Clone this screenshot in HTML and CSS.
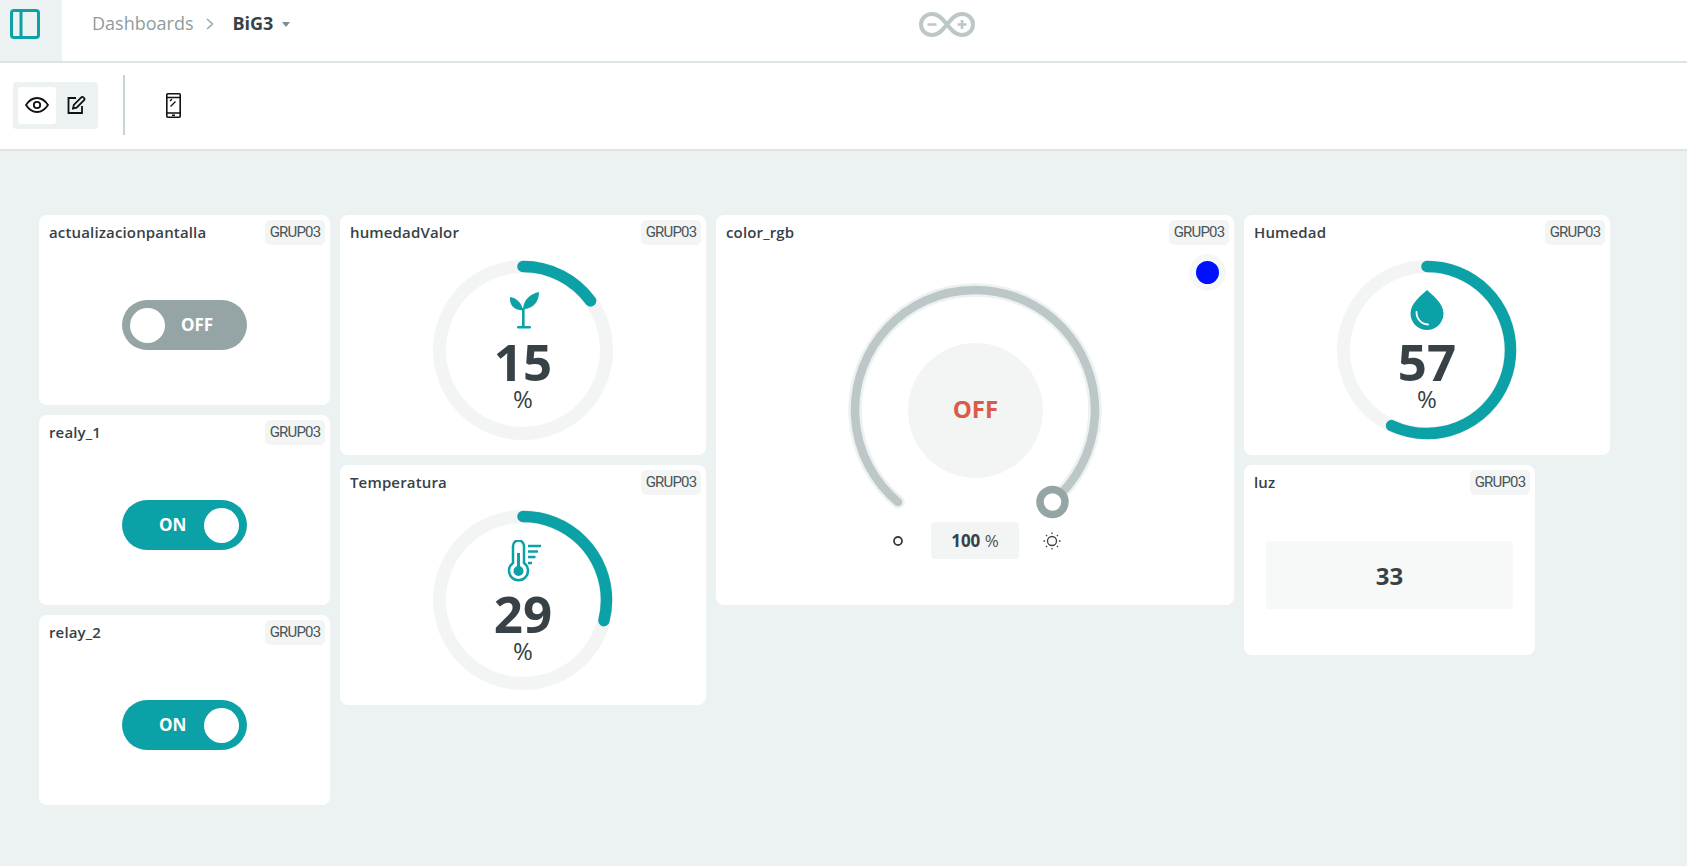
FILE: index.html
```html
<!DOCTYPE html>
<html lang="en">
<head>
  <meta charset="UTF-8" />
  <meta name="viewport" content="width=device-width,initial-scale=1" />
  <title>BiG3 – Dashboards</title>
  <link rel="stylesheet" href="styles.css">
</head>
<body>
  <header class="topbar">
    <button class="panel-btn" type="button" aria-label="Toggle sidebar">
      <svg width="30" height="30" viewBox="0 0 30 30" fill="none" stroke="#0ca1a6" stroke-width="3">
        <rect x="1.5" y="1.5" width="27" height="27" rx="2.5" />
        <path d="M11 1.5v27" />
      </svg>
    </button>
    <nav class="crumbs">
      <span class="crumb-link">Dashboards</span>
      <svg class="crumb-sep" width="8" height="12" viewBox="0 0 8 12" fill="none" stroke="#95a5a6" stroke-width="1.4"><path d="M1 1l5.5 5L1 11" /></svg>
      <span class="crumb-current">BiG3</span>
      <span class="caret"></span>
    </nav>
    <svg class="logo" width="56" height="25" viewBox="0 0 56 25" fill="none" stroke="#bdc7c7">
      <path stroke-width="4" d="M13 2C6.800 2 2 6.600 2 12.500S6.800 23 13 23c8 0 12-7 15-10.500C31 9 35 2 43 2c6.200 0 11 4.600 11 10.500S49.200 23 43 23c-8 0-12-7-15-10.500C25 9 21 2 13 2z" />
      <path stroke-width="2.600" d="M8.500 12.500h9M38.500 12.500h9M43 8v9" />
    </svg>
  </header>

  <div class="toolbar">
    <div class="mode-group">
      <span class="mode-btn active">
        <svg width="24" height="16" viewBox="0 0 24 16" fill="none" stroke="#111" stroke-width="1.800"><path d="M1 8c3-4.600 6.700-7 11-7s8 2.400 11 7c-3 4.600-6.700 7-11 7S4 12.600 1 8z" /><circle cx="12" cy="8" r="3.200" /></svg>
      </span>
      <span class="mode-btn">
        <svg class="pencil" width="20" height="20" viewBox="0 0 20 20" fill="none" stroke="#111" stroke-width="1.800"><path d="M10 3H2.500v15h13.500v-7" /><path d="M7 13.500l.8-3.600 7.500-7.500c.6-.6 1.400-.6 2 0l.8.800c.6.600.6 1.400 0 2l-7.500 7.500z" /></svg>
      </span>
    </div>
    <span class="toolbar-sep"></span>
    <svg class="phone" width="15" height="25" viewBox="0 0 15 25" fill="none" stroke="#111" stroke-width="1.600">
      <rect x=".8" y=".8" width="13.400" height="23.400" rx="1" />
      <path d="M.8 4.500h13.400M.8 20h13.400M6 22.300h3" />
      <path stroke-width="1.300" d="M4.500 13.500l5-5M4 8l2-2" />
    </svg>
  </div>

  <main class="dashboard">
    <div class="col col-sm">
      <section class="card">
        <div class="card-head"><h2>actualizacionpantalla</h2><span class="tag">GRUP03</span></div>
        <div class="card-body">
          <div class="switch"><span class="knob"></span><span class="switch-text">OFF</span></div>
        </div>
      </section>
      <section class="card">
        <div class="card-head"><h2>realy_1</h2><span class="tag">GRUP03</span></div>
        <div class="card-body">
          <div class="switch on"><span class="switch-text">ON</span><span class="knob"></span></div>
        </div>
      </section>
      <section class="card">
        <div class="card-head"><h2>relay_2</h2><span class="tag">GRUP03</span></div>
        <div class="card-body">
          <div class="switch on"><span class="switch-text">ON</span><span class="knob"></span></div>
        </div>
      </section>
    </div>

    <div class="col col-md">
      <section class="card card-gauge">
        <div class="card-head"><h2>humedadValor</h2><span class="tag">GRUP03</span></div>
        <div class="gauge">
          <svg class="gauge-ring" width="180" height="180" viewBox="0 0 180 180" fill="none">
            <circle cx="90" cy="90" r="83.500" stroke="#f3f4f4" stroke-width="13" />
            <circle cx="90" cy="90" r="83.500" stroke="#0ca1a6" stroke-width="11.500" stroke-linecap="round" pathLength="100" stroke-dasharray="15 100" transform="rotate(-90 90 90)" />
          </svg>
          <div class="gauge-inner">
            <svg width="40" height="40" viewBox="0 0 40 40" fill="#0ca1a6">
              <path d="M20 20C18.500 12 13 8 7 7c-.5 7 2.500 13 13 13.500z" />
              <path d="M20 19.500C20.500 9 28 3.500 36 2c0 9-5 16.500-16 17.500z" />
              <rect x="19" y="18" width="2.600" height="19" />
              <rect x="14" y="36" width="14" height="2.500" rx="1.200" />
            </svg>
            <span class="gauge-value">15</span>
            <span class="gauge-unit">%</span>
          </div>
        </div>
      </section>
      <section class="card card-gauge">
        <div class="card-head"><h2>Temperatura</h2><span class="tag">GRUP03</span></div>
        <div class="gauge">
          <svg class="gauge-ring" width="180" height="180" viewBox="0 0 180 180" fill="none">
            <circle cx="90" cy="90" r="83.500" stroke="#f3f4f4" stroke-width="13" />
            <circle cx="90" cy="90" r="83.500" stroke="#0ca1a6" stroke-width="11.500" stroke-linecap="round" pathLength="100" stroke-dasharray="29 100" transform="rotate(-90 90 90)" />
          </svg>
          <div class="gauge-inner">
            <svg width="40" height="42" viewBox="0 0 40 42" fill="none" stroke="#0ca1a6" stroke-width="2.500">
              <path d="M10 23V6a5.500 5.500 0 0 1 11 0v17a9.500 9.500 0 1 1-11 0z" />
              <path stroke-width="3" d="M15.500 13v18" />
              <circle cx="15.500" cy="31" r="5" fill="#0ca1a6" stroke="none" />
              <path d="M25 6h13M25 11.500h10M25 17h7.500M25 23h4" />
            </svg>
            <span class="gauge-value">29</span>
            <span class="gauge-unit">%</span>
          </div>
        </div>
      </section>
    </div>

    <div class="col col-lg">
      <section class="card card-color">
        <div class="card-head"><h2>color_rgb</h2><span class="tag">GRUP03</span></div>
        <span class="color-dot"></span>
        <div class="dial">
          <svg width="260" height="242" viewBox="0 0 260 242" fill="none" stroke-linecap="round">
            <path d="M52.900 221.900A120 120 0 1 1 207.100 221.900" stroke="#ecf1f1" stroke-width="13.500" />
            <path d="M52.900 221.900A120 120 0 1 1 207.100 221.900" stroke="#bdc7c7" stroke-width="8.500" />
            <circle cx="207.500" cy="222" r="12.500" fill="#fff" stroke="#95a5a6" stroke-width="7.500" />
          </svg>
          <div class="dial-center">OFF</div>
        </div>
        <div class="brightness">
          <svg width="20" height="20" viewBox="0 0 20 20" fill="none" stroke="#374146" stroke-width="1.800"><circle cx="10" cy="10" r="4" /></svg>
          <div class="brightness-box"><b>100</b> %</div>
          <svg width="20" height="20" viewBox="0 0 20 20" fill="none" stroke="#374146" stroke-width="1.300">
            <circle cx="10" cy="10" r="4.500" />
            <path d="M10 1.500v1.600M10 16.900v1.600M1.500 10h1.600M16.900 10h1.600M4 4l1.100 1.100M14.900 14.900L16 16M4 16l1.100-1.100M14.900 5.100L16 4" />
          </svg>
        </div>
      </section>
    </div>

    <div class="col col-md">
      <section class="card card-gauge">
        <div class="card-head"><h2>Humedad</h2><span class="tag">GRUP03</span></div>
        <div class="gauge">
          <svg class="gauge-ring" width="180" height="180" viewBox="0 0 180 180" fill="none">
            <circle cx="90" cy="90" r="83.500" stroke="#f3f4f4" stroke-width="13" />
            <circle cx="90" cy="90" r="83.500" stroke="#0ca1a6" stroke-width="11.500" stroke-linecap="round" pathLength="100" stroke-dasharray="57 100" transform="rotate(-90 90 90)" />
          </svg>
          <div class="gauge-inner">
            <svg width="40" height="40" viewBox="0 0 40 40">
              <path fill="#0ca1a6" d="M20 0C15 5 3.500 13 3.500 23.500a16.500 16.500 0 0 0 33 0C36.500 13 25 5 20 0z" />
              <path fill="none" stroke="#fff" stroke-width="1.800" stroke-linecap="round" d="M9.500 22c0 7 4.500 12 11.500 12.500" />
            </svg>
            <span class="gauge-value">57</span>
            <span class="gauge-unit">%</span>
          </div>
        </div>
      </section>
      <section class="card card-value">
        <div class="card-head"><h2>luz</h2><span class="tag">GRUP03</span></div>
        <div class="card-body">
          <div class="value-box">33</div>
        </div>
      </section>
    </div>
  </main>
</body>
</html>
```

FILE: styles.css
```css
body {
  margin: 0;
  height: 100vh;
  overflow: hidden;
  background: #ecf1f1;
  color: #374146;
  font-family: "Open Sans", sans-serif;
}
.topbar {
  display: flex;
  align-items: center;
  height: 61px;
  background: white;
  border-bottom: 2px solid #dce4e4;
}
.panel-btn {
  display: flex;
  align-items: center;
  justify-content: center;
  width: 62px;
  height: 100%;
  padding: 0 12px 13px 0;
  border: none;
  background: #ecf1f1;
}
.crumbs {
  display: flex;
  align-items: center;
  margin-left: 30px;
  padding-bottom: 15px;
  font-size: 18px;
}
.crumb-link {
  color: #8f9c9d;
}
.crumb-sep {
  margin: 2px 18px 0 13px;
}
.crumb-current {
  font-weight: 700;
}
.caret {
  width: 0;
  height: 0;
  margin: 2px 0 0 9px;
  border-left: 4px solid transparent;
  border-right: 4px solid transparent;
  border-top: 5px solid #7f8c8d;
}
.logo {
  margin: -12px 0 0 629px;
}
.toolbar {
  display: flex;
  align-items: center;
  height: 84px;
  padding: 0 0 2px 13px;
  background: white;
  border-bottom: 2px solid #dce4e4;
}
.mode-group {
  display: flex;
  padding: 5px;
  background: #ecf1f1;
  border-radius: 4px;
}
.mode-btn {
  display: flex;
  align-items: center;
  justify-content: center;
  width: 37px;
  height: 37px;
  border-radius: 3px;
}
.mode-btn.active {
  width: 38px;
  background: white;
}
.pencil {
  margin-left: 2px;
}
.toolbar-sep {
  width: 2px;
  height: 60px;
  margin: 0 41px 0 25px;
  background: #c8d3d3;
}
.dashboard {
  display: flex;
  align-items: flex-start;
  gap: 10px;
  padding: 64px 0 0 39px;
}
.col {
  display: flex;
  flex-direction: column;
  gap: 10px;
}
.col-sm { width: 291px; }
.col-md { width: 366px; }
.col-lg { width: 518px; }
.card {
  position: relative;
  display: flex;
  flex-direction: column;
  height: 190px;
  box-sizing: border-box;
  background: white;
  border-radius: 8px;
}
.card-gauge {
  height: 240px;
}
.card-color {
  height: 390px;
}
.card-value {
  width: 291px;
}
.card-head {
  display: flex;
  justify-content: space-between;
  align-items: flex-start;
  height: 30px;
  padding: 5px 5px 0 10px;
  box-sizing: border-box;
  flex-shrink: 0;
}
.card-head h2 {
  margin: 0;
  font-size: 15px;
  font-weight: 600;
  letter-spacing: 0.15px;
  line-height: 24px;
}
.tag {
  width: 60px;
  height: 25px;
  background: #f3f4f4;
  border-radius: 5px;
  color: #4a555a;
  font-family: Roboto, sans-serif;
  font-size: 15px;
  letter-spacing: -0.8px;
  line-height: 25px;
  text-align: center;
}
.card-body {
  flex: 1;
  display: flex;
  align-items: center;
  justify-content: center;
}
.switch {
  display: flex;
  align-items: center;
  gap: 16px;
  width: 125px;
  height: 50px;
  padding: 0 8px;
  box-sizing: border-box;
  background: #95a5a6;
  border-radius: 25px;
}
.switch.on {
  justify-content: space-between;
  padding: 0 8px 0 37px;
  background: #0ca1a6;
}
.knob {
  width: 35px;
  height: 35px;
  background: white;
  border-radius: 50%;
}
.switch-text {
  color: white;
  font-size: 17px;
  font-weight: 700;
  line-height: 22px;
}
.gauge {
  position: relative;
  width: 180px;
  height: 180px;
  margin: 15px auto 0;
}
.gauge-ring {
  display: block;
}
.gauge-inner {
  position: absolute;
  inset: 0;
  display: flex;
  flex-direction: column;
  align-items: center;
  padding-top: 30px;
  box-sizing: border-box;
}
.gauge-value {
  margin-top: 6px;
  font-size: 51px;
  font-weight: 700;
  line-height: 50px;
}
.gauge-unit {
  margin-top: 1px;
  font-size: 24px;
  line-height: 24px;
}
.color-dot {
  position: absolute;
  top: 39px;
  right: 8px;
  width: 23px;
  height: 23px;
  background: #0010ff;
  border: 7px solid #f5f7f7;
  border-radius: 50%;
}
.dial {
  position: relative;
  width: 260px;
  height: 242px;
  margin: 35px auto 0;
}
.dial svg {
  display: block;
}
.dial-center {
  position: absolute;
  top: 63px;
  left: 63px;
  width: 135px;
  height: 135px;
  background: #f3f4f4;
  border-radius: 50%;
  color: #da5b4a;
  font-size: 24px;
  font-weight: 700;
  line-height: 131px;
  text-align: center;
}
.brightness {
  display: flex;
  align-items: center;
  justify-content: center;
  gap: 23px;
}
.brightness-box {
  width: 88px;
  height: 37px;
  background: #f3f4f4;
  border-radius: 4px;
  color: #4a555a;
  font-size: 17px;
  line-height: 37px;
  text-align: center;
}
.brightness-box b {
  color: #374146;
}
.value-box {
  width: 247px;
  height: 68px;
  background: #f7f9f9;
  border-radius: 3px;
  font-size: 24px;
  font-weight: 700;
  line-height: 70px;
  text-align: center;
}
```
